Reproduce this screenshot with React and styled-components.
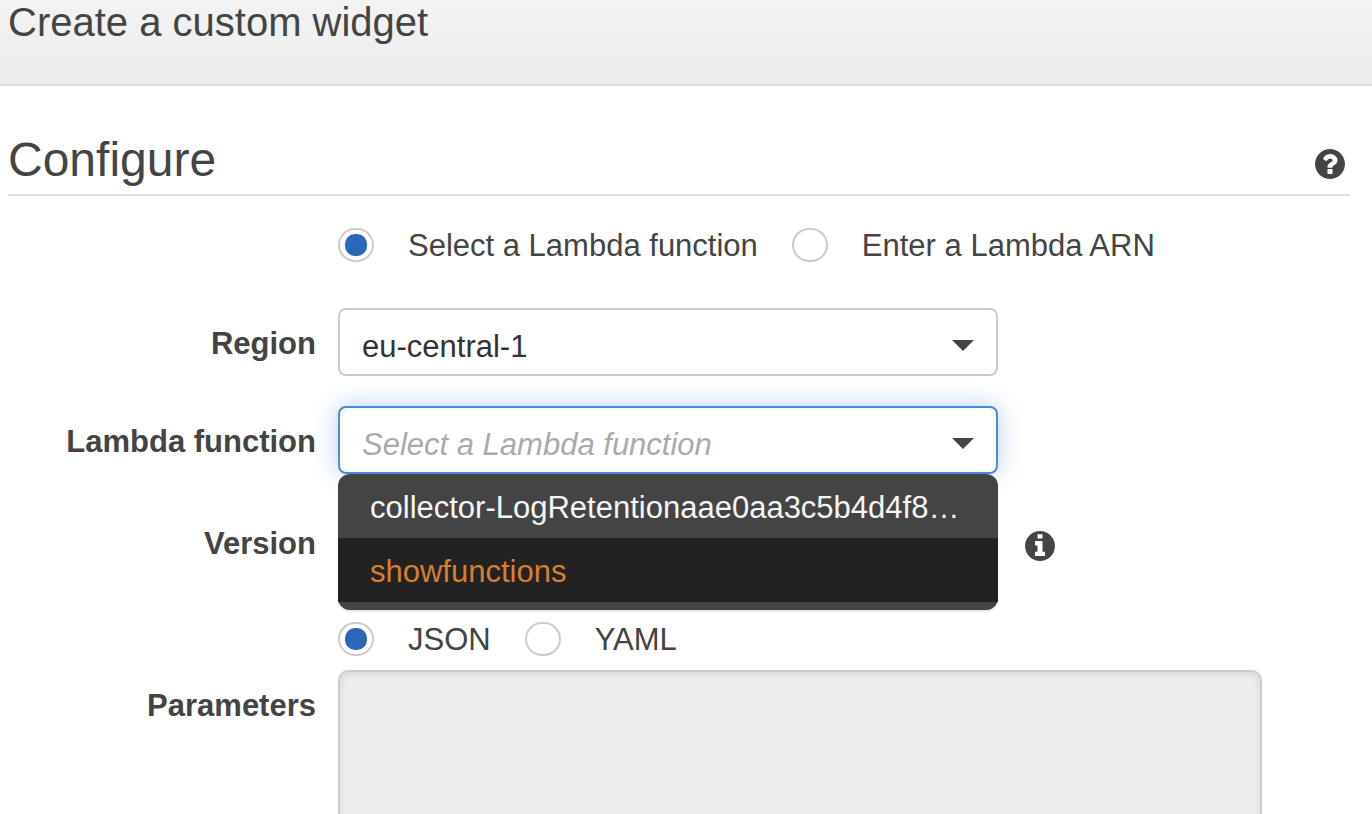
import styled, { createGlobalStyle } from "styled-components"
import { useState } from "react";

const functions = ["collector-LogRetentionaae0aa3c5b4d4f8a2c91", "showfunctions"];

const HELP = "M1024 1376v-192q0-14-9-23t-23-9h-192q-14 0-23 9t-9 23v192q0 14 9 23t23 9h192q14 0 23-9t9-23zm256-672q0-88-55.5-163t-138.5-116-170-41q-243 0-371 213-15 24 8 42l132 100q7 6 19 6 16 0 25-12 53-68 86-92 34-24 86-24 48 0 85.5 26t37.5 59q0 38-20 61t-68 45q-63 28-115.5 86.5t-52.5 125.5v36q0 14 9 23t23 9h192q14 0 23-9t9-23q0-19 21.5-49.5t54.5-49.5q32-18 49-28.5t46-35 44.5-48 28-60.5 12.5-81zm384 192q0 209-103 385.5t-279.5 279.5-385.5 103-385.5-103-279.5-279.5-103-385.5 103-385.5 279.5-279.5 385.5-103 385.5 103 279.5 279.5 103 385.5z";
const INFO = "M1152 1376v-160q0-14-9-23t-23-9h-96v-512q0-14-9-23t-23-9h-320q-14 0-23 9t-9 23v160q0 14 9 23t23 9h96v320h-96q-14 0-23 9t-9 23v160q0 14 9 23t23 9h448q14 0 23-9t9-23zm-128-896v-160q0-14-9-23t-23-9h-192q-14 0-23 9t-9 23v160q0 14 9 23t23 9h192q14 0 23-9t9-23zm640 416q0 209-103 385.5t-279.5 279.5-385.5 103-385.5-103-279.5-279.5-103-385.5 103-385.5 279.5-279.5 385.5-103 385.5 103 279.5 279.5 103 385.5z";

function CircleIcon({ d }) {
    return (
        <svg width="30" height="30" viewBox="128 128 1536 1536" fill="currentColor" aria-hidden="true">
            <path d={d} />
        </svg>
    )
}

function SelectBox({ children, active, placeholder, ...rest }) {
    return (
        <SelectWrapper>
            <Select $active={active} $placeholder={placeholder} {...rest}>
                {children}
            </Select>
            <Arrow viewBox="0 0 22 11" aria-hidden="true">
                <path d="M0 0h22L11 11z" fill="#444" />
            </Arrow>
        </SelectWrapper>
    )
}

export default function App() {
    const [source, setSource] = useState("function");
    const [format, setFormat] = useState("json");
    const [lambda, setLambda] = useState("");
    const [open, setOpen] = useState(true);

    const pick = (name) => {
        setLambda(name);
        setOpen(false);
    };

    return (
        <Container>
            <GlobalStyle />

            <Header>
                <Title>Create a custom widget</Title>
            </Header>

            <Content>
                <SectionHeader>
                    <h2>Configure</h2>
                    <IconButton type="button" aria-label="Help">
                        <CircleIcon d={HELP} />
                    </IconButton>
                </SectionHeader>

                <Form>
                    <RadioGroup>
                        <RadioLabel>
                            <Radio name="source" checked={source === "function"} onChange={() => setSource("function")} />
                            <span>Select a Lambda function</span>
                        </RadioLabel>
                        <RadioLabel>
                            <Radio name="source" checked={source === "arn"} onChange={() => setSource("arn")} />
                            <span>Enter a Lambda ARN</span>
                        </RadioLabel>
                    </RadioGroup>

                    <Row>
                        <Label htmlFor="region">Region</Label>
                        <SelectBox id="region" defaultValue="eu-central-1">
                            <option>eu-central-1</option>
                        </SelectBox>
                    </Row>

                    <Row>
                        <Label htmlFor="lambda">Lambda function</Label>
                        <Field>
                            <SelectBox
                                id="lambda"
                                active={open}
                                placeholder={!lambda}
                                value={lambda}
                                onChange={(e) => pick(e.target.value)}
                            >
                                <option value="">Select a Lambda function</option>
                                {functions.map((name) => <option key={name}>{name}</option>)}
                            </SelectBox>
                            {open && (
                                <Menu>
                                    {functions.map((name, i) => (
                                        <li key={name}>
                                            <MenuItem type="button" $active={i === 1} onClick={() => pick(name)}>
                                                {name}
                                            </MenuItem>
                                        </li>
                                    ))}
                                </Menu>
                            )}
                        </Field>
                    </Row>

                    <VersionRow>
                        <Label htmlFor="version">Version</Label>
                        <VersionField>
                            <SelectBox id="version" disabled />
                            <IconButton type="button" aria-label="Version info">
                                <CircleIcon d={INFO} />
                            </IconButton>
                        </VersionField>
                    </VersionRow>

                    <ParametersBlock>
                        <FormatGroup>
                            <RadioLabel>
                                <Radio name="format" checked={format === "json"} onChange={() => setFormat("json")} />
                                <span>JSON</span>
                            </RadioLabel>
                            <RadioLabel>
                                <Radio name="format" checked={format === "yaml"} onChange={() => setFormat("yaml")} />
                                <span>YAML</span>
                            </RadioLabel>
                        </FormatGroup>
                        <Row $top>
                            <Label htmlFor="parameters">Parameters</Label>
                            <TextArea id="parameters" />
                        </Row>
                    </ParametersBlock>
                </Form>
            </Content>
        </Container>
    )
}

const GlobalStyle = createGlobalStyle`
    * {
        box-sizing: border-box;
    }

    body {
        margin: 0;
        background: #fff;
    }

    button, select, textarea {
        font: inherit;
    }
`

const Container = styled.div`
    height: 100vh;
    overflow: hidden;
    color: #444;
    font-family: "Helvetica Neue", "Liberation Sans", Arial, sans-serif;
    font-size: 31px;
    line-height: 34px;
`

const Header = styled.header`
    padding: 0 8px 40px;
    background: linear-gradient(#f3f3f3, #ececec);
    border-bottom: 2px solid #ddd;
`

const Title = styled.h1`
    margin: 0;
    font-size: 40px;
    font-weight: 400;
    line-height: 44px;
`

const Content = styled.main`
    padding: 44px 22px 0 8px;
`

const SectionHeader = styled.div`
    display: flex;
    align-items: center;
    justify-content: space-between;
    padding: 0 5px 4px 0;
    border-bottom: 2px solid #ddd;

    h2 {
        margin: 0;
        font-size: 48px;
        font-weight: 400;
        line-height: 60px;
    }
`

const IconButton = styled.button`
    display: flex;
    padding: 8px 0 0;
    border: none;
    background: none;
    color: #444;
    cursor: pointer;
`

const Form = styled.form`
    display: flex;
    flex-direction: column;
    gap: 30px;
    padding-top: 32px;
`

const Row = styled.div`
    display: grid;
    grid-template-columns: 308px minmax(0, 1fr);
    column-gap: 22px;
    align-items: ${({ $top }) => ($top ? "start" : "center")};

    ${({ $top }) => $top && "label { padding-top: 19px; }"}
`

const VersionRow = styled(Row)`
    padding-top: 4px;
`

const Label = styled.label`
    font-weight: 700;
    text-align: right;
    padding-top: 4px;
`

const RadioGroup = styled.div`
    display: flex;
    gap: 34px;
    padding: 0 0 14px 330px;
`

const FormatGroup = styled(RadioGroup)`
    padding-bottom: 0;
`

const RadioLabel = styled.label`
    display: flex;
    align-items: flex-start;
    gap: 34px;

    span {
        line-height: 36px;
    }
`

const Radio = styled.input.attrs({ type: "radio" })`
    appearance: none;
    display: grid;
    place-items: center;
    width: 36px;
    height: 34px;
    margin: 0;
    border: 2px solid #ccc;
    border-radius: 17px;
    background: #fff;

    &:checked::before {
        content: "";
        width: 22px;
        height: 22px;
        border-radius: 10px;
        background: #2a67b7;
    }
`

const Field = styled.div`
    position: relative;
    max-width: 660px;
`

const VersionField = styled.div`
    display: grid;
    grid-template-columns: minmax(0, 660px) auto;
    justify-content: start;
    align-items: center;
    column-gap: 27px;
`

const SelectWrapper = styled.div`
    display: grid;
    align-items: center;
    max-width: 660px;

    > * {
        grid-area: 1 / 1;
    }
`

const Select = styled.select`
    appearance: none;
    width: 100%;
    height: 68px;
    padding: 9px 60px 0 22px;
    border: 2px solid ${({ $active }) => ($active ? "#4a8adb" : "#ccc")};
    border-radius: 8px;
    background: #fff;
    color: ${({ $placeholder }) => ($placeholder ? "#aaa" : "#333")};
    font-style: ${({ $placeholder }) => ($placeholder ? "italic" : "normal")};
    box-shadow: ${({ $active }) => ($active ? "0 0 24px rgba(74, 138, 219, 0.4)" : "none")};
    outline: none;
`

const Arrow = styled.svg`
    justify-self: end;
    width: 22px;
    height: 11px;
    margin: 6px 24px 0 0;
    pointer-events: none;
`

const Menu = styled.ul`
    position: absolute;
    z-index: 2;
    top: 100%;
    left: 0;
    right: 0;
    margin: 0;
    padding: 0 0 8px;
    list-style: none;
    background: #444;
    border-radius: 12px;
    box-shadow: 0 2px 2px rgba(0, 0, 0, 0.1);
`

const MenuItem = styled.button`
    display: block;
    width: 100%;
    height: 64px;
    padding: 4px 32px 0;
    border: none;
    background: ${({ $active }) => ($active ? "#222" : "transparent")};
    color: ${({ $active }) => ($active ? "#d67f2d" : "#f5f5f5")};
    text-align: left;
    white-space: nowrap;
    overflow: hidden;
    text-overflow: ellipsis;
    cursor: pointer;
`

const ParametersBlock = styled.div`
    display: flex;
    flex-direction: column;
    gap: 12px;
    padding-top: 16px;
`

const TextArea = styled.textarea`
    width: 100%;
    max-width: 924px;
    height: 240px;
    padding: 16px 22px;
    border: 2px solid #ccc;
    border-radius: 10px;
    background: #ededed;
    box-shadow: inset 0 2px 8px rgba(0, 0, 0, 0.1);
    resize: none;
    outline: none;
`
